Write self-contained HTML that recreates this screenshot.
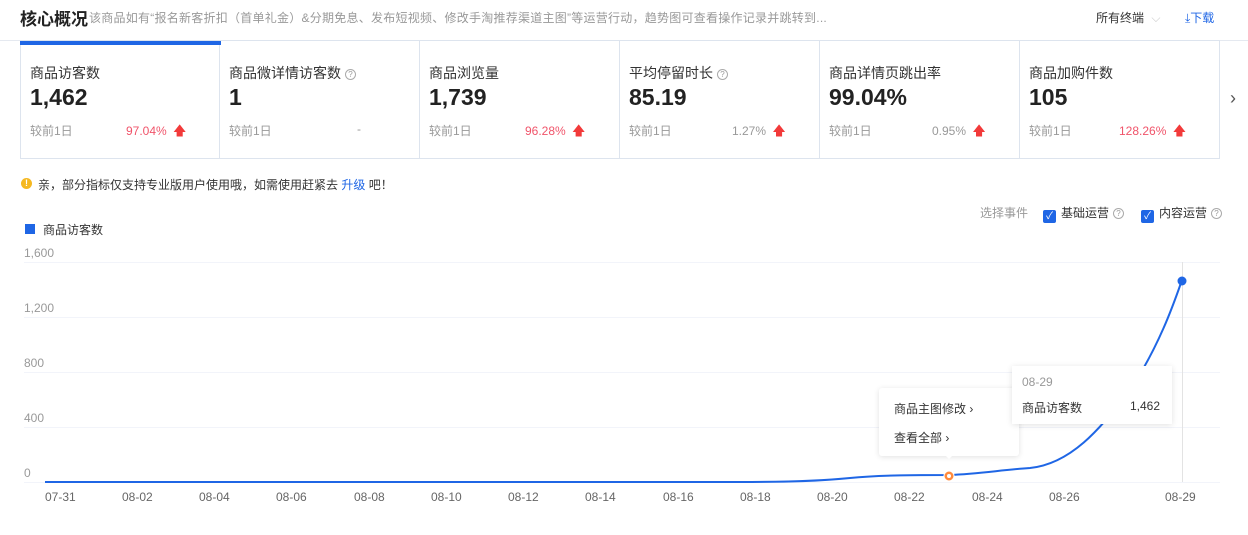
<!DOCTYPE html>
<html><head><meta charset="utf-8"><style>
*{margin:0;padding:0;box-sizing:border-box}
body{width:1248px;height:535px;background:#fff;font-family:"Liberation Sans","Noto Sans CJK SC",sans-serif;position:relative;overflow:hidden;color:#333}
.a{position:absolute;white-space:nowrap}
.card{position:absolute;top:40px;width:200px;height:119px;border:1px solid #dde4ee;border-left:none}
.card .t{position:absolute;left:9px;top:22px;font-size:14px;color:#333}
.card .v{position:absolute;left:9px;top:43px;font-size:23px;font-weight:bold;color:#222}
.card .c{position:absolute;left:9px;top:81px;font-size:12px;color:#999}
.card .p{position:absolute;top:81px;font-size:12px;color:#999}
.card .p.r{color:#f0546a}
.q{display:inline-block;width:11px;height:11px;border:1px solid #aaa;border-radius:50%;font-size:8px;line-height:9px;text-align:center;color:#999;vertical-align:1px;margin-left:4px}
.up{color:#f23a3a;font-size:13px;margin-left:3px}
.yl{font-size:12px;color:#999;left:24px}
.xl{font-size:12px;color:#666;top:490px}
.cb{display:inline-block;width:13px;height:13px;background:#1f66e5;border-radius:2px;vertical-align:-2px;margin-right:5px;color:#fff;font-size:10px;line-height:13px;text-align:center}
</style></head><body>
<div class="a" style="left:20px;top:5px;font-size:17px;font-weight:bold;color:#222">核心概况</div>
<div class="a" style="left:89px;top:9px;font-size:12px;color:#999;letter-spacing:0.25px">该商品如有“报名新客折扣（首单礼金）&amp;分期免息、发布短视频、修改手淘推荐渠道主图”等运营行动，趋势图可查看操作记录并跳转到...</div>
<div class="a" style="left:1096px;top:9px;font-size:12px;color:#333">所有终端 <span style="color:#ccc;margin-left:4px">⌵</span></div>
<div class="a" style="left:1185px;top:9px;font-size:12px;color:#1f66e5">⤓下载</div>
<div class="a" style="left:0;top:40px;width:1248px;height:1px;background:#e5e9f0"></div>

<div class="card" style="left:20px;border-left:1px solid #dde4ee"><div class="a" style="left:-1px;top:0;width:201px;height:4px;background:#1f66e5"></div><div class="t">商品访客数</div><div class="v">1,462</div><div class="c">较前1日</div><div class="p r" style="left:105px">97.04% <span class="up">🡅</span></div></div>
<div class="card" style="left:220px"><div class="t">商品微详情访客数<span class="q">?</span></div><div class="v">1</div><div class="c">较前1日</div><div class="p" style="left:137px">-</div></div>
<div class="card" style="left:420px"><div class="t">商品浏览量</div><div class="v">1,739</div><div class="c">较前1日</div><div class="p r" style="left:105px">96.28% <span class="up">🡅</span></div></div>
<div class="card" style="left:620px"><div class="t">平均停留时长<span class="q">?</span></div><div class="v">85.19</div><div class="c">较前1日</div><div class="p" style="left:112px">1.27% <span class="up">🡅</span></div></div>
<div class="card" style="left:820px"><div class="t">商品详情页跳出率</div><div class="v">99.04%</div><div class="c">较前1日</div><div class="p" style="left:112px">0.95% <span class="up">🡅</span></div></div>
<div class="card" style="left:1020px"><div class="t">商品加购件数</div><div class="v">105</div><div class="c">较前1日</div><div class="p r" style="left:99px">128.26% <span class="up">🡅</span></div></div>
<div class="a" style="left:1230px;top:88px;font-size:18px;color:#555">›</div>

<div class="a" style="left:21px;top:178px;width:11px;height:11px;border-radius:50%;background:#f5b820;color:#fff;font-size:9px;line-height:11px;text-align:center;font-weight:bold">!</div>
<div class="a" style="left:38px;top:176px;font-size:12px;color:#333">亲，部分指标仅支持专业版用户使用哦，如需使用赶紧去 <span style="color:#1f66e5">升级</span> 吧！</div>

<div class="a" style="left:980px;top:204px;font-size:12px;color:#999">选择事件</div>
<div class="a" style="left:1043px;top:204px;font-size:12px;color:#333"><span class="cb">✓</span>基础运营<span class="q">?</span></div>
<div class="a" style="left:1141px;top:204px;font-size:12px;color:#333"><span class="cb">✓</span>内容运营<span class="q">?</span></div>

<div class="a" style="left:25px;top:224px;width:10px;height:10px;background:#1f66e5"></div>
<div class="a" style="left:43px;top:221px;font-size:12px;color:#333">商品访客数</div>

<div class="a yl" style="top:246px">1,600</div>
<div class="a yl" style="top:301px">1,200</div>
<div class="a yl" style="top:356px">800</div>
<div class="a yl" style="top:411px">400</div>
<div class="a yl" style="top:466px">0</div>

<svg class="a" style="left:0;top:0" width="1248" height="535">
<g stroke="#f2f4fa" stroke-width="1">
<line x1="24" y1="262.5" x2="1220" y2="262.5"/><line x1="24" y1="317.5" x2="1220" y2="317.5"/><line x1="24" y1="372.5" x2="1220" y2="372.5"/><line x1="24" y1="427.5" x2="1220" y2="427.5"/><line x1="24" y1="482.5" x2="1220" y2="482.5"/>
</g>
<line x1="1182.5" y1="262" x2="1182.5" y2="482" stroke="#e3e3e3"/>
<path d="M45 482 L740 482 C790 482 820 481 850 478 C880 475 920 475 949 475 C980 474 1000 470 1030 468 C1070 464 1100 430 1130 390 C1160 345 1175 300 1182 280" fill="none" stroke="#1f66e5" stroke-width="2"/>
<circle cx="1182" cy="281" r="4.5" fill="#1f66e5"/>
<circle cx="949" cy="476" r="5" fill="#ff8a3d" stroke="#fff" stroke-width="1"/>
<circle cx="949" cy="476" r="2" fill="#fff"/>
</svg>

<div class="a" style="left:879px;top:388px;width:140px;height:68px;background:#fff;box-shadow:0 1px 6px rgba(0,0,0,.12);border-radius:3px"></div>
<div class="a" style="left:943px;top:453px;width:0;height:0;border-left:6px solid transparent;border-right:6px solid transparent;border-top:6px solid #fff"></div>
<div class="a" style="left:894px;top:400px;font-size:12px;color:#333">商品主图修改 ›</div>
<div class="a" style="left:894px;top:429px;font-size:12px;color:#333">查看全部 ›</div>

<div class="a" style="left:1012px;top:366px;width:160px;height:58px;background:#fff;box-shadow:0 1px 6px rgba(0,0,0,.12)"></div>
<div class="a" style="left:1022px;top:375px;font-size:12px;color:#999">08-29</div>
<div class="a" style="left:1022px;top:399px;font-size:12px;color:#333">商品访客数</div>
<div class="a" style="left:1130px;top:399px;font-size:12px;color:#333">1,462</div>

<div class="a xl" style="left:45px">07-31</div>
<div class="a xl" style="left:122px">08-02</div>
<div class="a xl" style="left:199px">08-04</div>
<div class="a xl" style="left:276px">08-06</div>
<div class="a xl" style="left:354px">08-08</div>
<div class="a xl" style="left:431px">08-10</div>
<div class="a xl" style="left:508px">08-12</div>
<div class="a xl" style="left:585px">08-14</div>
<div class="a xl" style="left:663px">08-16</div>
<div class="a xl" style="left:740px">08-18</div>
<div class="a xl" style="left:817px">08-20</div>
<div class="a xl" style="left:894px">08-22</div>
<div class="a xl" style="left:972px">08-24</div>
<div class="a xl" style="left:1049px">08-26</div>
<div class="a xl" style="left:1165px">08-29</div>
</body></html>
